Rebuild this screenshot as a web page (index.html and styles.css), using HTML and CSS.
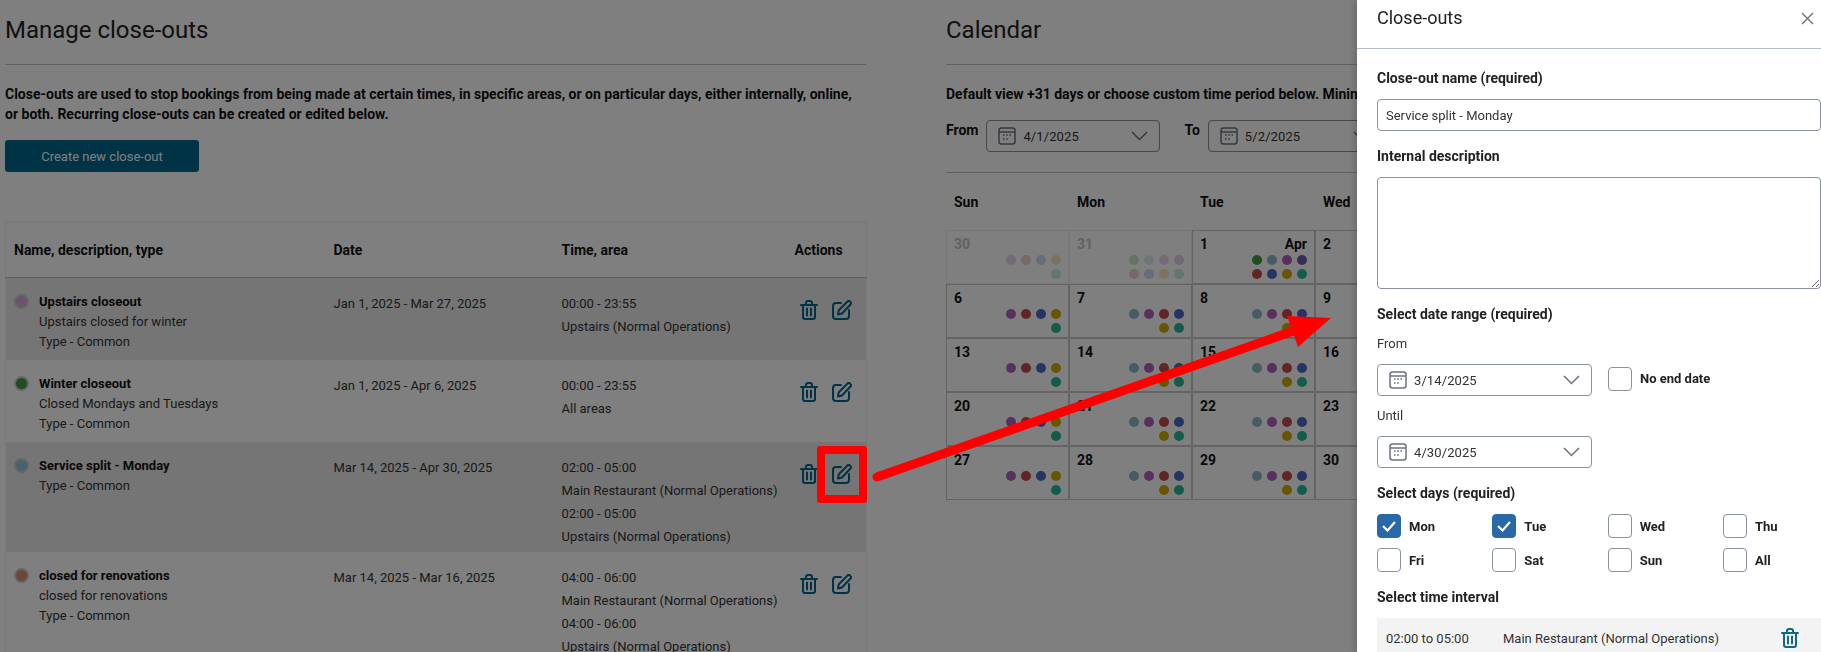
FILE: index.html
```html
<!DOCTYPE html>
<html lang="en">
<head>
    <meta charset="UTF-8">
    <title>Close-outs</title>
    <link rel="stylesheet" href="styles.css">
</head>
<body>
    <svg class="icon-defs" width="0" height="0">
        <symbol id="trash" viewBox="0 0 18 20">
            <path d="M1 5h16M6 4.500V3a2 2 0 0 1 2-2h2a2 2 0 0 1 2 2v1.500M3 5v12a2 2 0 0 0 2 2h8a2 2 0 0 0 2-2V5M7 8.500v7M11 8.500v7" fill="none" stroke="currentColor" stroke-width="2" stroke-linecap="round" stroke-linejoin="round"/>
        </symbol>
        <symbol id="edit" viewBox="0 0 20 20">
            <path d="M9 3H4a3 3 0 0 0-3 3v10a3 3 0 0 0 3 3h10a3 3 0 0 0 3-3v-6M6 14.500l.8-4.300L15.500 1.500a1.700 1.700 0 0 1 2.400 0l.6.6a1.700 1.700 0 0 1 0 2.400L10 13.500z" fill="none" stroke="currentColor" stroke-width="2" stroke-linecap="round" stroke-linejoin="round"/>
        </symbol>
        <symbol id="calendar" viewBox="0 0 18 18">
            <rect x="1" y="1" width="16" height="16" rx="2.500" fill="none" stroke="currentColor" stroke-width="1.500"/>
            <path d="M1 5h16" stroke="currentColor" stroke-width="1.500"/>
            <path d="M5 8h1.600M8.200 8h1.600M11.400 8h1.600M5 12h1.600M8.200 12h1.600" stroke="currentColor" stroke-width="1.600"/>
        </symbol>
        <symbol id="chevron" viewBox="0 0 17 10">
            <path d="M1 1l7.500 7.500L16 1" fill="none" stroke="currentColor" stroke-width="1.500"/>
        </symbol>
    </svg>

    <div class="page">
        <section class="manage">
            <h1>Manage close-outs</h1>
            <hr>
            <p class="intro">Close-outs are used to stop bookings from being made at certain times, in specific areas, or on particular days, either internally, online, or both. Recurring close-outs can be created or edited below.</p>
            <button class="btn-primary" type="button">Create new close-out</button>

            <table class="closeouts">
                <thead>
                    <tr>
                        <th class="col-name">Name, description, type</th>
                        <th class="col-date">Date</th>
                        <th class="col-time">Time, area</th>
                        <th class="col-actions">Actions</th>
                    </tr>
                </thead>
                <tbody>
                    <tr>
                        <td>
                            <div class="name-cell">
                                <span class="swatch swatch-purple"></span>
                                <div><strong>Upstairs closeout</strong><br>Upstairs closed for winter<br>Type - Common</div>
                            </div>
                        </td>
                        <td class="date-cell">Jan 1, 2025 - Mar 27, 2025</td>
                        <td class="time-cell">00:00 - 23:55<br>Upstairs (Normal Operations)</td>
                        <td>
                            <div class="actions">
                                <svg class="icon-trash"><use href="#trash"/></svg>
                                <svg class="icon-edit"><use href="#edit"/></svg>
                            </div>
                        </td>
                    </tr>
                    <tr>
                        <td>
                            <div class="name-cell">
                                <span class="swatch swatch-green"></span>
                                <div><strong>Winter closeout</strong><br>Closed Mondays and Tuesdays<br>Type - Common</div>
                            </div>
                        </td>
                        <td class="date-cell">Jan 1, 2025 - Apr 6, 2025</td>
                        <td class="time-cell">00:00 - 23:55<br>All areas</td>
                        <td>
                            <div class="actions">
                                <svg class="icon-trash"><use href="#trash"/></svg>
                                <svg class="icon-edit"><use href="#edit"/></svg>
                            </div>
                        </td>
                    </tr>
                    <tr>
                        <td>
                            <div class="name-cell">
                                <span class="swatch swatch-teal"></span>
                                <div><strong>Service split - Monday</strong><br>Type - Common</div>
                            </div>
                        </td>
                        <td class="date-cell">Mar 14, 2025 - Apr 30, 2025</td>
                        <td class="time-cell">02:00 - 05:00<br>Main Restaurant (Normal Operations)<br>02:00 - 05:00<br>Upstairs (Normal Operations)</td>
                        <td>
                            <div class="actions">
                                <svg class="icon-trash"><use href="#trash"/></svg>
                                <svg class="icon-edit"><use href="#edit"/></svg>
                            </div>
                        </td>
                    </tr>
                    <tr>
                        <td>
                            <div class="name-cell">
                                <span class="swatch swatch-orange"></span>
                                <div><strong>closed for renovations</strong><br>closed for renovations<br>Type - Common</div>
                            </div>
                        </td>
                        <td class="date-cell">Mar 14, 2025 - Mar 16, 2025</td>
                        <td class="time-cell">04:00 - 06:00<br>Main Restaurant (Normal Operations)<br>04:00 - 06:00<br>Upstairs (Normal Operations)</td>
                        <td>
                            <div class="actions">
                                <svg class="icon-trash"><use href="#trash"/></svg>
                                <svg class="icon-edit"><use href="#edit"/></svg>
                            </div>
                        </td>
                    </tr>
                </tbody>
            </table>
        </section>

        <section class="calendar">
            <h1>Calendar</h1>
            <hr>
            <p class="intro intro-nowrap">Default view +31 days or choose custom time period below. Minimum view 7 days.</p>
            <div class="range">
                <span class="range-label">From</span>
                <div class="date-select">
                    <svg class="icon-cal"><use href="#calendar"/></svg>
                    <span>4/1/2025</span>
                    <svg class="icon-chevron"><use href="#chevron"/></svg>
                </div>
                <span class="range-label range-to">To</span>
                <div class="date-select">
                    <svg class="icon-cal"><use href="#calendar"/></svg>
                    <span>5/2/2025</span>
                    <svg class="icon-chevron"><use href="#chevron"/></svg>
                </div>
            </div>
            <hr class="range-rule">

            <div class="weekdays">
                <span>Sun</span><span>Mon</span><span>Tue</span><span>Wed</span>
            </div>
            <div class="month">
                <div class="day day-muted">
                    <div class="day-top">30</div>
                    <div class="dots"><i class="purple"></i><i class="red"></i><i class="blue"></i><i class="yellow"></i><i class="mint"></i></div>
                </div>
                <div class="day day-muted">
                    <div class="day-top">31</div>
                    <div class="dots"><i class="green"></i><i class="teal"></i><i class="purple"></i><i class="indigo"></i><i class="red"></i><i class="blue"></i><i class="yellow"></i><i class="mint"></i></div>
                </div>
                <div class="day day-first">
                    <div class="day-top"><span>1</span><span>Apr</span></div>
                    <div class="dots"><i class="green"></i><i class="teal"></i><i class="purple"></i><i class="indigo"></i><i class="red"></i><i class="blue"></i><i class="yellow"></i><i class="mint"></i></div>
                </div>
                <div class="day"><div class="day-top">2</div></div>

                <div class="day">
                    <div class="day-top">6</div>
                    <div class="dots"><i class="purple"></i><i class="red"></i><i class="blue"></i><i class="yellow"></i><i class="mint"></i></div>
                </div>
                <div class="day">
                    <div class="day-top">7</div>
                    <div class="dots"><i class="teal"></i><i class="purple"></i><i class="red"></i><i class="blue"></i><i class="yellow"></i><i class="mint"></i></div>
                </div>
                <div class="day">
                    <div class="day-top">8</div>
                    <div class="dots"><i class="teal"></i><i class="purple"></i><i class="red"></i><i class="blue"></i><i class="yellow"></i><i class="mint"></i></div>
                </div>
                <div class="day"><div class="day-top">9</div></div>

                <div class="day">
                    <div class="day-top">13</div>
                    <div class="dots"><i class="purple"></i><i class="red"></i><i class="blue"></i><i class="yellow"></i><i class="mint"></i></div>
                </div>
                <div class="day">
                    <div class="day-top">14</div>
                    <div class="dots"><i class="teal"></i><i class="purple"></i><i class="red"></i><i class="blue"></i><i class="yellow"></i><i class="mint"></i></div>
                </div>
                <div class="day">
                    <div class="day-top">15</div>
                    <div class="dots"><i class="teal"></i><i class="purple"></i><i class="red"></i><i class="blue"></i><i class="yellow"></i><i class="mint"></i></div>
                </div>
                <div class="day"><div class="day-top">16</div></div>

                <div class="day">
                    <div class="day-top">20</div>
                    <div class="dots"><i class="purple"></i><i class="red"></i><i class="blue"></i><i class="yellow"></i><i class="mint"></i></div>
                </div>
                <div class="day">
                    <div class="day-top">21</div>
                    <div class="dots"><i class="teal"></i><i class="purple"></i><i class="red"></i><i class="blue"></i><i class="yellow"></i><i class="mint"></i></div>
                </div>
                <div class="day">
                    <div class="day-top">22</div>
                    <div class="dots"><i class="teal"></i><i class="purple"></i><i class="red"></i><i class="blue"></i><i class="yellow"></i><i class="mint"></i></div>
                </div>
                <div class="day"><div class="day-top">23</div></div>

                <div class="day">
                    <div class="day-top">27</div>
                    <div class="dots"><i class="purple"></i><i class="red"></i><i class="blue"></i><i class="yellow"></i><i class="mint"></i></div>
                </div>
                <div class="day">
                    <div class="day-top">28</div>
                    <div class="dots"><i class="teal"></i><i class="purple"></i><i class="red"></i><i class="blue"></i><i class="yellow"></i><i class="mint"></i></div>
                </div>
                <div class="day">
                    <div class="day-top">29</div>
                    <div class="dots"><i class="teal"></i><i class="purple"></i><i class="red"></i><i class="blue"></i><i class="yellow"></i><i class="mint"></i></div>
                </div>
                <div class="day"><div class="day-top">30</div></div>
            </div>
        </section>
    </div>

    <div class="backdrop"></div>

    <!-- annotation drawn on top of the dimmed page -->
    <div class="highlight-box"></div>
    <svg class="arrow" width="1821" height="652">
        <line x1="877" y1="477" x2="1296" y2="330" stroke="#ff0000" stroke-width="9" stroke-linecap="round"/>
        <polygon points="1331,318 1287,316 1298,347" fill="#ff0000"/>
    </svg>

    <aside class="drawer">
        <header class="drawer-head">
            <h2>Close-outs</h2>
            <svg class="drawer-close" width="13" height="13" viewBox="0 0 13 13">
                <path d="M1 1l11 11M12 1L1 12" fill="none" stroke="#6b7280" stroke-width="1.400"/>
            </svg>
        </header>
        <form class="drawer-body">
            <div class="form-group">
                <label class="field-label" for="closeout_name">Close-out name (required)</label>
                <input class="text-input" type="text" id="closeout_name" value="Service split - Monday">
            </div>
            <div class="form-group">
                <label class="field-label" for="closeout_desc">Internal description</label>
                <textarea class="text-area" id="closeout_desc"></textarea>
            </div>
            <div class="form-group">
                <div class="field-label">Select date range (required)</div>
                <div class="sub-label">From</div>
                <div class="date-row">
                    <div class="date-select date-select-wide">
                        <svg class="icon-cal"><use href="#calendar"/></svg>
                        <span>3/14/2025</span>
                        <svg class="icon-chevron"><use href="#chevron"/></svg>
                    </div>
                    <div class="check check-noend"><span class="box"></span>No end date</div>
                </div>
                <div class="sub-label sub-label-until">Until</div>
                <div class="date-select date-select-wide">
                    <svg class="icon-cal"><use href="#calendar"/></svg>
                    <span>4/30/2025</span>
                    <svg class="icon-chevron"><use href="#chevron"/></svg>
                </div>
            </div>
            <div class="form-group">
                <div class="field-label">Select days (required)</div>
                <div class="day-checks">
                    <div class="check"><span class="box box-on"><svg width="16" height="12" viewBox="0 0 16 12"><path d="M2 6l4.500 4.500L14 2" fill="none" stroke="#fff" stroke-width="2.200"/></svg></span>Mon</div>
                    <div class="check"><span class="box box-on"><svg width="16" height="12" viewBox="0 0 16 12"><path d="M2 6l4.500 4.500L14 2" fill="none" stroke="#fff" stroke-width="2.200"/></svg></span>Tue</div>
                    <div class="check"><span class="box"></span>Wed</div>
                    <div class="check"><span class="box"></span>Thu</div>
                    <div class="check"><span class="box"></span>Fri</div>
                    <div class="check"><span class="box"></span>Sat</div>
                    <div class="check"><span class="box"></span>Sun</div>
                    <div class="check"><span class="box"></span>All</div>
                </div>
            </div>
            <div class="form-group">
                <div class="field-label">Select time interval</div>
                <div class="interval">
                    <span class="interval-time">02:00 to 05:00</span>
                    <span class="interval-area">Main Restaurant (Normal Operations)</span>
                    <svg class="interval-trash"><use href="#trash"/></svg>
                </div>
            </div>
        </form>
    </aside>
</body>
</html>
```

FILE: styles.css
```css
* {
    box-sizing: border-box;
}
html, body {
    height: 100%;
}
body {
    margin: 0;
    font-family: Roboto, Arial, sans-serif;
    font-size: 13px;
    color: #222;
    background-color: #fff;
    overflow: hidden;
}
.icon-defs {
    position: absolute;
}
.page {
    display: flex;
    width: 1821px;
    height: 652px;
    padding-left: 5px;
    overflow: hidden;
}
.manage {
    width: 861px;
    flex-shrink: 0;
}
.calendar {
    width: 875px;
    flex-shrink: 0;
    margin-left: 80px;
}
h1 {
    margin: 16px 0 0;
    font-size: 24px;
    font-weight: 400;
    line-height: 28px;
    color: #222;
}
hr {
    margin: 20px 0 0;
    border: none;
    border-top: 1px solid #c4c4c4;
}
.intro {
    margin: 19px 0 0;
    font-size: 14px;
    font-weight: 700;
    line-height: 20px;
    color: #111;
}
.intro-nowrap {
    white-space: nowrap;
}
.btn-primary {
    display: block;
    width: 194px;
    height: 32px;
    margin-top: 16px;
    background-color: #00668c;
    border: none;
    border-radius: 3px;
    font-family: inherit;
    font-size: 13px;
    color: #fff;
}

/* close-out table */
.closeouts {
    width: 861px;
    margin-top: 49px;
    table-layout: fixed;
    border-collapse: collapse;
    border: 1px solid #f2f2f2;
}
.closeouts th {
    height: 56px;
    padding: 0 9px;
    font-size: 14px;
    font-weight: 700;
    text-align: left;
    color: #111;
    border-bottom: 1px solid #bcbcbc;
}
.col-name { width: 319px; }
.col-date { width: 228px; }
.col-time { width: 233px; }
.col-actions { width: 81px; }
.closeouts td {
    padding: 14px 9px 8px;
    vertical-align: top;
    line-height: 20px;
    color: #333;
}
.closeouts .col-name,
.closeouts td:first-child {
    padding-left: 8px;
}
.closeouts tbody tr:nth-child(odd) {
    background-color: #ebebeb;
}
.closeouts strong {
    color: #111;
}
.closeouts .date-cell {
    padding-top: 16px;
}
.closeouts .time-cell {
    padding-top: 14px;
    padding-right: 0;
    padding-bottom: 4px;
    line-height: 23px;
    white-space: nowrap;
}
.name-cell {
    display: flex;
    gap: 10px;
}
.swatch {
    flex-shrink: 0;
    width: 15px;
    height: 15px;
    margin-top: 2px;
    border-radius: 50%;
    border: 2px solid #ccc;
}
.swatch-purple { background-color: #d9a6dc; }
.swatch-green { background-color: #3f9a3f; }
.swatch-teal { background-color: #8cc7d6; }
.swatch-orange { background-color: #dd8c6c; }
.actions {
    display: flex;
    gap: 14px;
    margin-top: 8px;
    padding-left: 5px;
    color: #00668c;
}
.icon-trash {
    width: 18px;
    height: 20px;
}
.icon-edit {
    width: 20px;
    height: 20px;
}

/* calendar */
.range {
    display: flex;
    align-items: flex-start;
    margin-top: 16px;
}
.range-label {
    margin-right: 8px;
    font-size: 14px;
    font-weight: 700;
    line-height: 20px;
    color: #111;
}
.range-to {
    margin-left: 24px;
}
.date-select {
    display: flex;
    align-items: center;
    width: 174px;
    height: 32px;
    padding: 0 11px;
    background-color: #fff;
    border: 1px solid #8a92a0;
    border-radius: 4px;
    font-size: 13px;
    letter-spacing: .1px;
    color: #333;
}
.date-select-wide {
    width: 215px;
}
.icon-cal {
    flex-shrink: 0;
    width: 18px;
    height: 18px;
    margin-right: 7px;
    color: #6b7280;
}
.icon-chevron {
    flex-shrink: 0;
    width: 17px;
    height: 10px;
    margin-left: auto;
    color: #6b7280;
}
.range-rule {
    margin-top: 20px;
}
.weekdays {
    display: grid;
    grid-template-columns: repeat(4, 123px);
    height: 57px;
    align-items: center;
    padding-left: 8px;
    font-size: 14px;
    font-weight: 700;
    color: #111;
}
.month {
    display: grid;
    grid-template-columns: repeat(4, 123px);
    grid-auto-rows: 54px;
}
.day {
    padding: 3px 7px;
    border: 1px solid #c8c8c8;
    background-color: #fff;
}
.day-muted {
    border-color: #eee;
}
.day-muted .day-top {
    opacity: .25;
}
.day-muted .dots {
    opacity: .25;
}
.day-top {
    display: flex;
    justify-content: space-between;
    font-size: 14px;
    font-weight: 700;
    line-height: 20px;
    color: #111;
}
.dots {
    display: flex;
    flex-wrap: wrap;
    justify-content: flex-end;
    gap: 4px 5px;
    width: 55px;
    margin: 1px 0 0 auto;
}
.dots i {
    width: 10px;
    height: 10px;
    border-radius: 50%;
}
.green { background-color: #3f9a3f; }
.teal { background-color: #8cb8c4; }
.purple { background-color: #b060c0; }
.indigo { background-color: #6e58b4; }
.red { background-color: #c44a4a; }
.blue { background-color: #4a68c4; }
.yellow { background-color: #d0aa00; }
.mint { background-color: #26b898; }

/* dimmed page + annotation */
.backdrop {
    position: fixed;
    top: 0;
    left: 0;
    right: 0;
    bottom: 0;
    background-color: rgba(0,0,0,0.5);
}
.highlight-box {
    position: absolute;
    top: 446px;
    left: 817px;
    width: 50px;
    height: 57px;
    border: 8px solid #ff0000;
    border-radius: 3px;
}
.arrow {
    position: absolute;
    top: 0;
    left: 0;
}

/* side drawer */
.drawer {
    position: absolute;
    top: 0;
    right: 0;
    bottom: 0;
    width: 464px;
    background-color: #fff;
    box-shadow: -3px 0 6px rgba(0,0,0,0.15);
    overflow: hidden;
}
.drawer-head {
    display: flex;
    justify-content: space-between;
    height: 49px;
    padding: 7px 7px 0 20px;
    border-bottom: 1px solid #b4bac4;
}
.drawer-head h2 {
    margin: 0;
    font-size: 18px;
    font-weight: 400;
    line-height: 22px;
    color: #222;
}
.drawer-close {
    margin-top: 5px;
}
.drawer-body {
    width: 464px;
    padding: 19px 0 0 20px;
}
.form-group {
    margin-bottom: 15px;
}
.field-label {
    display: block;
    margin-bottom: 11px;
    font-size: 14px;
    font-weight: 700;
    line-height: 20px;
    color: #222;
}
.text-input, .text-area {
    display: block;
    width: 444px;
    border: 1px solid #8a92a0;
    border-radius: 4px;
    font-family: inherit;
    font-size: 13px;
    color: #333;
}
.text-input {
    height: 32px;
    padding: 0 8px;
}
.text-area {
    height: 112px;
}
.sub-label {
    margin: -1px 0 10px;
    line-height: 20px;
    color: #333;
}
.sub-label-until {
    margin: 10px 0 10px;
}
.date-row {
    display: flex;
    align-items: center;
    gap: 16px;
}
.day-checks {
    display: grid;
    grid-template-columns: repeat(4, 115.33px);
    row-gap: 10px;
}
.check {
    display: flex;
    align-items: center;
    gap: 8px;
    font-size: 13px;
    font-weight: 700;
    color: #222;
}
.check-noend {
    margin-top: -3px;
}
.box {
    display: flex;
    align-items: center;
    justify-content: center;
    width: 24px;
    height: 24px;
    border: 1px solid #8a92a0;
    border-radius: 4px;
}
.box-on {
    background-color: #2a69a8;
    border-color: #2a69a8;
}
.interval {
    position: relative;
    display: flex;
    align-items: flex-start;
    height: 60px;
    padding: 11px 0 0 9px;
    background-color: #f3f3f3;
    line-height: 20px;
    color: #333;
}
.interval-time {
    width: 117px;
}
.interval-trash {
    position: absolute;
    top: 10px;
    left: 404px;
    width: 18px;
    height: 20px;
    color: #0f6a88;
}
```
